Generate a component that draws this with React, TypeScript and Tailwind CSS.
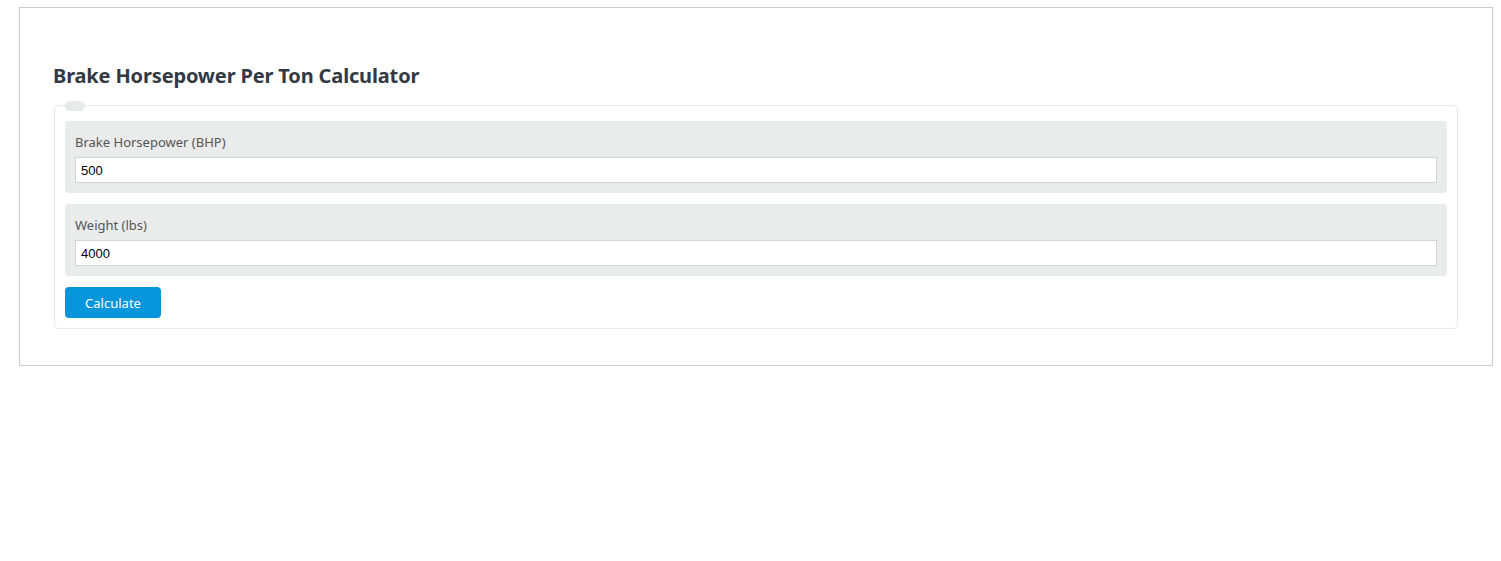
export default function App() {
  return (
    <div className="w-full bg-white pt-[7px] pl-[19px]" style={{ fontFamily: '"Noto Sans", "Open Sans", sans-serif' }}>
      <div className="w-[1474px] h-[359px] border border-[#cccccc] px-[34px] pt-[54px]">
        <h2 className="text-[20px] leading-[28px] font-bold text-[#333a42] mb-[15px] -ml-[1px] tracking-[-0.15px]">Brake Horsepower Per Ton Calculator</h2>
        <div className="relative border border-[#e8e8e8] rounded-[4px] px-[10px] pt-[15px] pb-[10px]">
          <div className="absolute left-[10px] top-[-5px] w-[20px] h-[10px] rounded-full bg-[#e8e9e9]" />
          <div className="flex flex-col gap-[11px]">
            <div className="bg-[#eaebeb] rounded-[4px] px-[10px] pt-[11px] pb-[10px]">
              <div className="text-[13px] leading-[20px] text-[#555555] mb-[5px]">Brake Horsepower (BHP)</div>
              <div className="h-[26px] bg-white border border-[#d4d4d4] flex items-center px-[5px] pt-[2px] text-[13px] text-black" style={{ fontFamily: '"Liberation Sans", Arial, sans-serif' }}>500</div>
            </div>
            <div className="bg-[#eaebeb] rounded-[4px] px-[10px] pt-[11px] pb-[10px]">
              <div className="text-[13px] leading-[20px] text-[#555555] mb-[5px]">Weight (lbs)</div>
              <div className="h-[26px] bg-white border border-[#d4d4d4] flex items-center px-[5px] pt-[2px] text-[13px] text-black" style={{ fontFamily: '"Liberation Sans", Arial, sans-serif' }}>4000</div>
            </div>
            <div>
              <button className="w-[96px] h-[31px] rounded-[4px] bg-[#0795db] text-white text-[13px] leading-[29px] pt-[1px]">Calculate</button>
            </div>
          </div>
        </div>
      </div>
    </div>
  );
}
